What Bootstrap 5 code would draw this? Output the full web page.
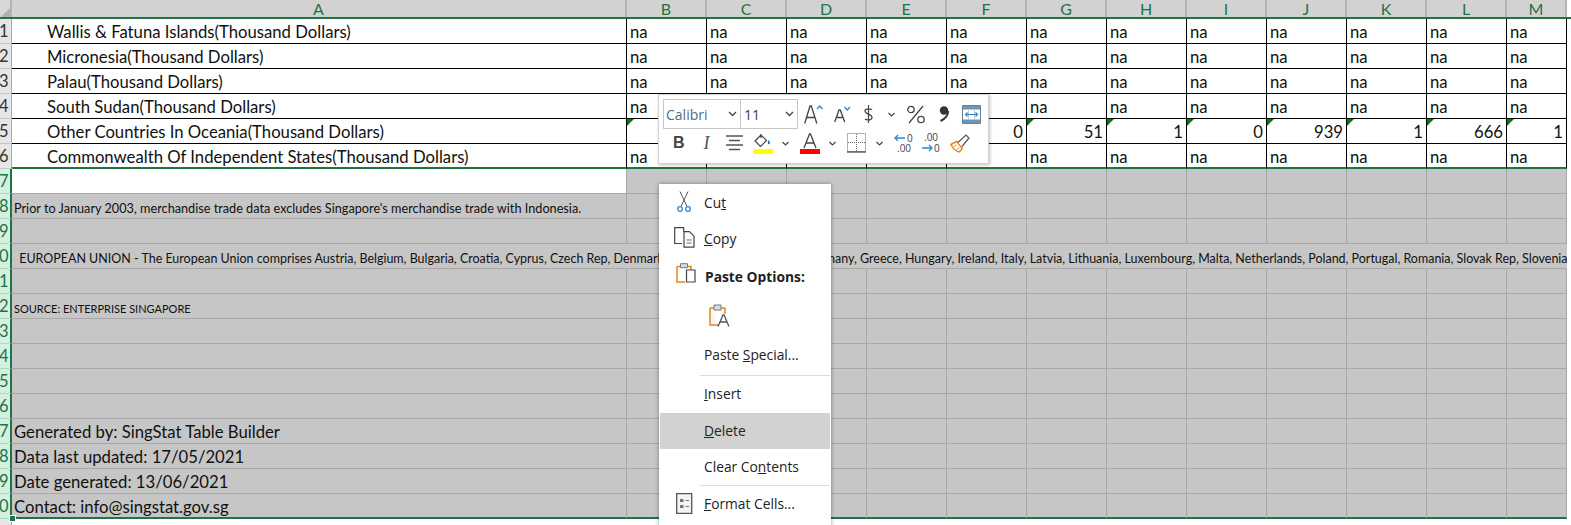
<!DOCTYPE html>
<html lang="en">
<head>
  <meta charset="UTF-8">
  <title>Worksheet</title>
  <link href="https://cdn.jsdelivr.net/npm/bootstrap@5.3.0/dist/css/bootstrap.min.css" rel="stylesheet">
  <style>
    html, body { height: 525px; overflow: hidden; }
    body { background: #fff; font-family: "Lato", "Liberation Sans", sans-serif; color: #111; }
    .sheet { width: 1571px; height: 525px; position: relative; overflow: hidden; }
    .sheet-row { display: grid; grid-template-columns: 12px 615px repeat(11, 80px) 60px 4px; grid-template-rows: 25px; height: 25px; }
    .sheet-head { grid-template-rows: 17px; height: 19px; background: #d2d2d2; border-bottom: 2px solid #217346; color: #217346; font-size: 16px; line-height: 17px; text-align: center; }
    .sheet-head > div { border-right: 2px solid #b4b4b4; }
    .head-corner { background: #d8d8d8; position: relative; overflow: hidden; }
    .head-corner::after { content: ""; position: absolute; right: 0; bottom: 0; border-bottom: 9px solid #b0b0b0; border-left: 9px solid transparent; }
    .sheet-head > div:last-child, .sheet-row > div:last-child { border: 0; background: #fff; }
    .row-num { background: #e6e6e6; color: #333; font-size: 16.500px; line-height: 25px; border-right: 1px solid #aaa; border-bottom: 1px solid #c8c8c8; overflow: hidden; white-space: nowrap; }
    .row-num span { display: block; width: 8px; margin-left: -1px; text-align: right; }
    .grey .row-num { background: #d3f0e0; color: #217346; border-right: 2px solid #217346; border-bottom-color: #b5d8c5; }
    .cell { font-size: 16.700px; line-height: 27px; padding: 0 3px; white-space: nowrap; border-right: 1px solid #000; border-bottom: 1px solid #000; }
    .cell.label { padding-left: 35px; }
    .cell.num { text-align: right; padding-right: 3px; position: relative; }
    .cell.num::before { content: ""; position: absolute; left: 0; top: 0; border-top: 7px solid #0a7a0a; border-right: 7px solid transparent; }
    .last-sel .cell { border-bottom: 2px solid #217346; }
    .grey { background: linear-gradient(#c6c6c6, #c6c6c6) 12px 0 / 1555px 100% no-repeat; }
    .grey .cell { border-color: #a8a8a8; padding-left: 2px; }
    .grey .cell.white-a { background: #fff; }
    .grey .cell.tiny { font-size: 12.700px; line-height: 29px; }
    .grey .cell.eu { font-size: 12.480px; line-height: 29px; padding-left: 4px; }
    .grey .cell.caps { font-size: 11px; line-height: 29px; }
    .grey.free-run .cell { border-right-color: transparent; }
    .grey.last-row .cell { border-bottom: 2px solid #217346; }
    .row-stub { height: 6px; width: 12px; background: #e6e6e6; border-right: 1px solid #aaa; }
    .fill-handle { position: absolute; left: 9px; top: 515px; width: 7px; height: 7px; background: #217346; border: 1px solid #fff; }
    /* floating format bar */
    .mini-bar { position: absolute; left: 658px; top: 94px; width: 331px; height: 70px; background: #fff; border: 1px solid #d4d4d4; box-shadow: 1px 1px 3px rgba(0,0,0,.25); padding: 4px; }
    .mini-line { display: flex; align-items: center; height: 30px; }
    .mini-line + .mini-line { height: 24px; margin-top: 2px; }
    .combo { height: 30px; border: 1px solid #c6c6c6; font-family: "Open Sans", sans-serif; font-size: 14px; display: flex; align-items: center; justify-content: space-between; padding: 0 3px 0 2px; color: #4f6b86; }
    .combo-font { width: 78px; }
    .combo-size { width: 58px; margin-left: -1px; color: #444; padding-left: 3px; }
    .tool { display: flex; align-items: center; justify-content: center; flex: none; }
    .tool svg { overflow: visible; }
    .sp6 { margin-left: 6px; } .sp7 { margin-left: 7px; } .sp9 { margin-left: 9px; } .sp10 { margin-left: 10px; }
    .sp11 { margin-left: 11px; } .sp12 { margin-left: 12px; } .sp13 { margin-left: 13px; } .sp14 { margin-left: 14px; }
    .sp15 { margin-left: 15px; } .sp16 { margin-left: 16px; } .sp19 { margin-left: 19px; }
    .tool-b { font-family: "Liberation Sans", sans-serif; font-size: 16px; line-height: 20px; color: #444; }
    .tool-i { font-family: "Liberation Serif", serif; font-size: 18px; line-height: 20px; color: #555; }
    .tool-num { font-family: "Open Sans", sans-serif; font-size: 10px; fill: #444; }
    /* context menu */
    .ctx { position: absolute; left: 659px; top: 184px; width: 172px; height: 345px; background: #fff; box-shadow: 0 0 4px rgba(0,0,0,.4); font-family: "Open Sans", sans-serif; font-size: 13.800px; color: #222; padding: 1px; }
    .ctx-item { position: relative; height: 36px; line-height: 36px; padding-left: 44px; white-space: nowrap; }
    .ctx-item.on { background: #d2d2d0; }
    .ctx-item svg { position: absolute; }
    .ctx-sep { height: 1px; background: #ddd; margin-left: 40px; }
    .ctx-head { font-weight: 700; height: 40px; line-height: 40px; padding-left: 45px; }
    .ctx-paste { height: 40px; position: relative; }
    .ctx-paste svg { position: absolute; left: 49px; top: 7px; }
    .ctx-tall { height: 38px; line-height: 36px; }
    .ctx-mid { height: 37px; line-height: 36px; }
    .ic-cut { left: 17px; top: 6px; }
    .ic-copy { left: 14px; top: 6px; }
    .ic-paste { left: 16px; top: 6px; }
    .ic-format { left: 16px; top: 7px; }
  </style>
</head>
<body>
  <div class="sheet">
    <div id="grid"></div>
    <div class="fill-handle"></div>

    <!-- Mini toolbar -->
    <div class="mini-bar">
      <div class="mini-line">
        <div class="combo combo-font"><span>Calibri</span><svg width="9" height="6" viewBox="0 0 9 6"><path d="M1 1l3.500 3.500L8 1" fill="none" stroke="#444" stroke-width="1.300"/></svg></div>
        <div class="combo combo-size"><span>11</span><svg width="9" height="6" viewBox="0 0 9 6"><path d="M1 1l3.500 3.500L8 1" fill="none" stroke="#444" stroke-width="1.300"/></svg></div>
        <div class="tool sp6"><svg width="19" height="20" viewBox="0 0 19 20"><path d="M.7 19.500L6 2h1.300l5.500 17.500M2.800 13.500h8" fill="none" stroke="#444" stroke-width="1.300"/><path d="M13 5l2.700-3L18.500 5" fill="none" stroke="#2b88d8" stroke-width="1.300"/></svg></div>
        <div class="tool sp11"><svg width="17" height="18" viewBox="0 0 17 18"><path d="M.7 17L5 5h1.300L10.700 17M2.300 12.500h7" fill="none" stroke="#444" stroke-width="1.300"/><path d="M10.500 2l2.700 3 2.800-3" fill="none" stroke="#2b88d8" stroke-width="1.300"/></svg></div>
        <div class="tool sp13"><svg width="9" height="20" viewBox="0 0 9 20"><path d="M8 6C7 4.500 1 4 1 7c0 3.500 7 2.800 7 6.500 0 3-5.500 2.800-7 1.500M4.500 1v18" fill="none" stroke="#444" stroke-width="1.200"/></svg></div>
        <div class="tool sp15"><svg width="7" height="5" viewBox="0 0 7 5"><path d="M.5 1l3 3 3-3" fill="none" stroke="#444" stroke-width="1.200"/></svg></div>
        <div class="tool sp12"><svg width="18" height="19" viewBox="0 0 18 19"><path d="M2 18L16 1" stroke="#444" stroke-width="1.300"/><circle cx="4" cy="4.500" r="3.200" fill="none" stroke="#444" stroke-width="1.300"/><circle cx="14" cy="14.500" r="3.200" fill="none" stroke="#444" stroke-width="1.300"/></svg></div>
        <div class="tool sp14"><svg width="10" height="16" viewBox="0 0 10 16"><circle cx="5" cy="4.500" r="4.200" fill="#333"/><path d="M9.200 5C9 10 6 13 1.500 15" fill="none" stroke="#333" stroke-width="2"/></svg></div>
        <div class="tool sp13"><svg width="19" height="19" viewBox="0 0 19 19"><path d="M.5.500h18v18H.5z" fill="#fff" stroke="#6a7f90"/><path d="M1 1h17v3.500H1zM1 14.500h17V18H1z" fill="#6d95b5"/><path d="M6.500 4.500v10M12.500 4.500v10" stroke="#c8c8c8"/><path d="M3.500 9.500h12M5.500 7.500l-2 2 2 2M13.500 7.500l2 2-2 2" fill="none" stroke="#2b88d8" stroke-width="1.200"/></svg></div>
      </div>
      <div class="mini-line">
        <div class="tool sp10"><b class="tool-b">B</b></div>
        <div class="tool sp19"><i class="tool-i">I</i></div>
        <div class="tool sp16"><svg width="17" height="18" viewBox="0 0 17 18"><path d="M0 2h17M3 6.500h11M0 11h17M3 15.500h11" stroke="#555" stroke-width="1.300"/></svg></div>
        <div class="tool sp10"><svg width="20" height="21" viewBox="0 0 20 21"><path d="M8 1v4M8 2l-6 6 5.500 5.500 6-6z" fill="none" stroke="#444" stroke-width="1.200"/><path d="M15.500 7c1.500 1.500 2 3.500.7 4.200-1.400.5-2-2-.7-4.200z" fill="#1f6fb0"/><path d="M0 16h20v5H0z" fill="#ffff00"/></svg></div>
        <div class="tool sp9"><svg width="7" height="5" viewBox="0 0 7 5"><path d="M.5 1l3 3 3-3" fill="none" stroke="#444" stroke-width="1.200"/></svg></div>
        <div class="tool sp11"><svg width="20" height="21" viewBox="0 0 20 21"><path d="M4 15L9.500 1h1L16 15M6 10h8" fill="none" stroke="#444" stroke-width="1.300"/><path d="M0 16h20v5H0z" fill="#f00"/></svg></div>
        <div class="tool sp9"><svg width="7" height="5" viewBox="0 0 7 5"><path d="M.5 1l3 3 3-3" fill="none" stroke="#444" stroke-width="1.200"/></svg></div>
        <div class="tool sp11"><svg width="19" height="20" viewBox="0 0 19 20"><path d="M.5.500h18v18H.5zM9.500 1v17M1 9.500h17" fill="none" stroke="#666" stroke-dasharray="1 1"/><path d="M0 19h19" stroke="#444" stroke-width="1.200"/></svg></div>
        <div class="tool sp10"><svg width="7" height="5" viewBox="0 0 7 5"><path d="M.5 1l3 3 3-3" fill="none" stroke="#444" stroke-width="1.200"/></svg></div>
        <div class="tool sp11"><svg width="20" height="20" viewBox="0 0 20 20"><path d="M1 5h10M4 2L1 5l3 3" fill="none" stroke="#2b88d8" stroke-width="1.300"/><text x="13" y="9" class="tool-num">0</text><text x="3" y="19" class="tool-num">.00</text></svg></div>
        <div class="tool sp7"><svg width="20" height="20" viewBox="0 0 20 20"><text x="3" y="8" class="tool-num">.00</text><path d="M1 15h10M8 12l3 3-3 3" fill="none" stroke="#2b88d8" stroke-width="1.300"/><text x="13" y="19" class="tool-num">0</text></svg></div>
        <div class="tool sp9"><svg width="20" height="19" viewBox="0 0 20 19"><path d="M.8 10.500l6-3 5.500 7-3 3.500C6 17.500 3 14.500.8 10.500z" fill="#fff" stroke="#e8871e" stroke-width="1.400"/><path d="M8 8.500l8-7.500 3 3-7 8.500" fill="#fff" stroke="#555" stroke-width="1.200"/><path d="M3.500 13l3-2M6.500 16l3-3" stroke="#e8871e"/></svg></div>
      </div>
    </div>

    <!-- Context menu -->
    <div class="ctx">
      <div class="ctx-item"><svg class="ic-cut" width="14" height="21" viewBox="0 0 14 21"><path d="M3 .500l7 15M11 .500L4 15.500" stroke="#555" fill="none"/><circle cx="3" cy="18" r="2.300" fill="none" stroke="#2b88d8" stroke-width="1.300"/><circle cx="11" cy="18" r="2.300" fill="none" stroke="#2b88d8" stroke-width="1.300"/></svg>Cu<u>t</u></div>
      <div class="ctx-item"><svg class="ic-copy" width="21" height="21" viewBox="0 0 21 21"><path d="M8 16.500H.7V.7h9v4" fill="#fff" stroke="#444" stroke-width="1.200"/><path d="M10 4.700h5.500l4.500 4.500v11H10z" fill="#fff" stroke="#444" stroke-width="1.200"/><path d="M12.500 13h5M12.500 16h5" stroke="#666"/></svg><u>C</u>opy</div>
      <div class="ctx-item ctx-head"><svg class="ic-paste" width="20" height="20" viewBox="0 0 20 20"><path d="M1 3.500h14v4M1 3.500v15.500h8" fill="none" stroke="#e8871e" stroke-width="1.500"/><path d="M4.500.7h7v4h-7z" fill="#ddd" stroke="#777"/><path d="M10.500 7h8.500v12h-8.500z" fill="#fff" stroke="#444" stroke-width="1.200"/></svg>Paste Options:</div>
      <div class="ctx-paste"><svg width="22" height="23" viewBox="0 0 22 23"><path d="M1 4h15v6M1 4v17h8" fill="#f7f7f7" stroke="#e8871e" stroke-width="1.500"/><path d="M5 1h7v5H5z" fill="#ddd" stroke="#777"/><path d="M9 22.500l5-11.500h1l5 11.500M11 18h7" fill="none" stroke="#555" stroke-width="1.300"/></svg></div>
      <div class="ctx-item ctx-tall">Paste <u>S</u>pecial...</div>
      <div class="ctx-sep"></div>
      <div class="ctx-item ctx-mid"><u>I</u>nsert</div>
      <div class="ctx-item on"><u>D</u>elete</div>
      <div class="ctx-item">Clear Co<u>n</u>tents</div>
      <div class="ctx-sep"></div>
      <div class="ctx-item"><svg class="ic-format" width="17" height="21" viewBox="0 0 17 21"><path d="M.7.700h15v19.600H.7z" fill="#f4f4f4" stroke="#555" stroke-width="1.300"/><path d="M4 6h3.500v3H4zM4 12h3.500v3H4z" fill="#777"/><path d="M9.500 7.500h3.500M9.500 13.500h3.500" stroke="#777"/></svg><u>F</u>ormat Cells...</div>
    </div>
  </div>

  <script>
    const cols = ['B','C','D','E','F','G','H','I','J','K','L','M'];
    const labels = ['Wallis & Fatuna Islands(Thousand Dollars)','Micronesia(Thousand Dollars)','Palau(Thousand Dollars)','South Sudan(Thousand Dollars)','Other Countries In Oceania(Thousand Dollars)','Commonwealth Of Independent States(Thousand Dollars)'];
    const oceania = ['0','0','0','0','0','51','1','0','939','1','666','1'];
    const notes = {
      8: ['Prior to January 2003, merchandise trade data excludes Singapore\'s merchandise trade with Indonesia.', 'tiny'],
      10: ['&nbsp;EUROPEAN UNION - The European Union comprises Austria, Belgium, Bulgaria, Croatia, Cyprus, Czech Rep, Denmark, Estonia, Finland, France, Germany, Greece, Hungary, Ireland, Italy, Latvia, Lithuania, Luxembourg, Malta, Netherlands, Poland, Portugal, Romania, Slovak Rep, Slovenia', 'eu'],
      12: ['SOURCE: ENTERPRISE SINGAPORE', 'caps'],
      17: ['Generated by: SingStat Table Builder'],
      18: ['Data last updated: 17/05/2021'],
      19: ['Date generated: 13/06/2021'],
      20: ['Contact: info@singstat.gov.sg']
    };
    let html = '<div class="sheet-row sheet-head"><div class="head-corner"></div><div>A</div>' + cols.map(c => '<div>' + c + '</div>').join('') + '<div></div></div>';
    labels.forEach((l, i) => {
      html += '<div class="sheet-row ' + (i == 5 ? 'last-sel' : '') + '"><div class="row-num"><span>' + (i + 1) + '</span></div><div class="cell label">' + l + '</div>';
      cols.forEach((c, j) => {
        html += i == 4 ? '<div class="cell num">' + oceania[j] + '</div>' : '<div class="cell">na</div>';
      });
      html += '<div></div></div>';
    });
    for (let r = 7; r <= 20; r++) {
      const n = notes[r];
      const rowCls = 'sheet-row grey' + (r == 10 ? ' free-run' : '') + (r == 20 ? ' last-row' : '');
      html += '<div class="' + rowCls + '"><div class="row-num"><span>' + (r % 10) + '</span></div><div class="cell' + (r == 7 ? ' white-a' : '') + (n && n[1] ? ' ' + n[1] : '') + '">' + (n ? n[0] : '') + '</div>';
      cols.forEach(() => html += '<div class="cell"></div>');
      html += '<div></div></div>';
    }
    html += '<div class="row-stub"></div>';
    document.getElementById('grid').innerHTML = html;
  </script>
  <script src="https://cdn.jsdelivr.net/npm/bootstrap@5.3.0/dist/js/bootstrap.bundle.min.js"></script>
</body>
</html>
